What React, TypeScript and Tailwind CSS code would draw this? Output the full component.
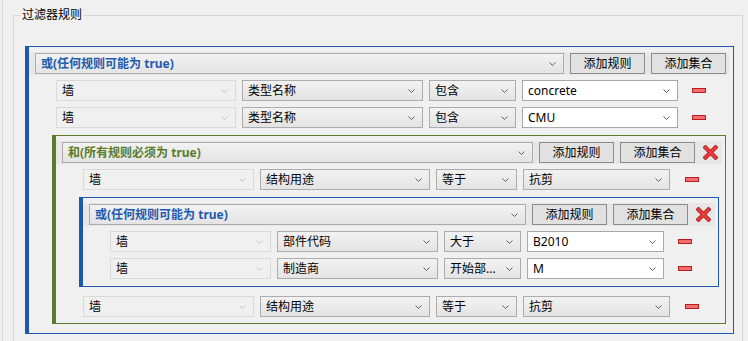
import type { ReactNode } from "react";

type Kind = "disabled" | "list" | "edit";

const boxByKind: Record<Kind, string> = {
  disabled: "border-[#d9d9d9] bg-[#f0f0f0] text-black",
  list: "border-[#acacac] bg-linear-to-b from-[#f2f2f2] to-[#e4e4e4] text-black",
  edit: "border-[#a9a9a9] bg-white text-black",
};

function Chevron({ light }: { light?: boolean }) {
  return (
    <svg
      width="7"
      height="4"
      viewBox="0 0 7 4"
      className={light ? "shrink-0 text-[#c4c4c4]" : "shrink-0 text-[#5f5f5f]"}
    >
      <path d="M0.5 0.5 L3.5 3.5 L6.5 0.5" fill="none" stroke="currentColor" strokeWidth="1" />
    </svg>
  );
}

function Combo({
  text,
  kind,
  className,
}: {
  text: string;
  kind: Kind;
  className: string;
}) {
  return (
    <div
      className={`flex h-[21px] shrink-0 items-center justify-between border pl-[5px] pr-[7px] ${boxByKind[kind]} ${className}`}
    >
      <span className="whitespace-nowrap leading-[17px]">{text}</span>
      <Chevron light={kind === "disabled"} />
    </div>
  );
}

function Minus({ className }: { className: string }) {
  return <div className={`h-[5px] w-[14px] shrink-0 border border-[#b81c1c] bg-[#f26d6d] ${className}`} />;
}

function CloseIcon() {
  return (
    <svg width="15" height="15" viewBox="0 0 15 15">
      <path d="M2.5 2.5 L12.5 12.5 M12.5 2.5 L2.5 12.5" stroke="#b01c1c" strokeWidth="4.2" strokeLinecap="square" />
      <path d="M2.5 2.5 L12.5 12.5 M12.5 2.5 L2.5 12.5" stroke="#ec3a3a" strokeWidth="2.6" strokeLinecap="square" />
    </svg>
  );
}

function Button({ children }: { children: ReactNode }) {
  return (
    <div className="ml-[6px] flex h-[21px] w-[75px] shrink-0 items-center justify-center border border-[#8c8c8c] bg-[#e1e1e1] leading-[17px] text-black">
      {children}
    </div>
  );
}

type Widths = { a: string; b: string; c: string; d: string; minus: string };

const L1: Widths = { a: "w-[180px]", b: "w-[181px]", c: "w-[87px]", d: "w-[156px]", minus: "ml-[8px]" };
const L2: Widths = { a: "w-[171px]", b: "w-[170px]", c: "w-[81px]", d: "w-[147px]", minus: "ml-[9px]" };
const L3: Widths = { a: "w-[161px]", b: "w-[161px]", c: "w-[77px]", d: "w-[137px]", minus: "ml-[8px]" };

function Rule({
  w,
  field,
  op,
  value,
  valueKind,
}: {
  w: Widths;
  field: string;
  op: string;
  value: string;
  valueKind: Kind;
}) {
  return (
    <div className="flex items-center gap-[6px]">
      <Combo text="墙" kind="disabled" className={w.a} />
      <Combo text={field} kind="list" className={w.b} />
      <Combo text={op} kind="list" className={w.c} />
      <Combo text={value} kind={valueKind} className={w.d} />
      <Minus className={w.minus} />
    </div>
  );
}

function Group({
  tone,
  label,
  closable,
  className,
  children,
}: {
  tone: "blue" | "green";
  label: string;
  closable?: boolean;
  className: string;
  children: ReactNode;
}) {
  const border = tone === "blue" ? "border-[#1c58ad]" : "border-[#5a7c2a]";
  const text = tone === "blue" ? "text-[#1f5aae]" : "text-[#5a7c2a]";
  return (
    <div className={`border-y border-r border-l-4 pt-[5px] ${border} ${className}`}>
      <div
        className={`flex h-[23px] items-center bg-[#e7e7e7] pl-[6px] ${closable ? "mr-[3px]" : "mr-[4px] pr-[3px]"}`}
      >
        <div className="flex h-[21px] min-w-0 flex-1 items-center justify-between border border-[#acacac] bg-linear-to-b from-[#f2f2f2] to-[#e4e4e4] pl-[5px] pr-[7px]">
          <span className={`whitespace-nowrap font-bold leading-[17px] ${text}`}>{label}</span>
          <Chevron />
        </div>
        <Button>添加规则</Button>
        <Button>添加集合</Button>
        {closable ? (
          <div className="flex w-[27px] shrink-0 pl-[8px]">
            <CloseIcon />
          </div>
        ) : null}
      </div>
      <div className="mt-[5px] flex flex-col gap-[6px] pl-[27px]">{children}</div>
    </div>
  );
}

export default function App() {
  return (
    <div className="h-[341px] w-[748px] overflow-hidden bg-[#f0f0f0] pl-[2px] font-['Noto_Sans','Noto_Sans_CJK_SC',sans-serif] text-[12px] text-black">
      <div className="h-full border-l border-[#dadada] pl-[10px] pt-[15px]">
        <div className="relative h-[340px] w-[730px] border border-[#d5d5d5] pl-[11px] pt-[30px]">
          <div className="absolute -top-[9px] left-[6px] h-[16px] bg-[#f0f0f0] px-[2px] leading-[16px]">
            过滤器规则
          </div>
          <Group tone="blue" label="或(任何规则可能为 true)" className="w-[709px] pb-[6px]">
            <Rule w={L1} field="类型名称" op="包含" value="concrete" valueKind="edit" />
            <Rule w={L1} field="类型名称" op="包含" value="CMU" valueKind="edit" />
            <div className="-ml-[4px] mb-[3px] mr-[7px] mt-[1px]">
              <Group tone="green" label="和(所有规则必须为 true)" closable className="pb-[6px]">
                <Rule w={L2} field="结构用途" op="等于" value="抗剪" valueKind="list" />
                <div className="-ml-[4px] mb-[3px] mr-[6px] mt-[1px]">
                  <Group tone="blue" label="或(任何规则可能为 true)" closable className="pb-[7px]">
                    <Rule w={L3} field="部件代码" op="大于" value="B2010" valueKind="edit" />
                    <Rule w={L3} field="制造商" op="开始部..." value="M" valueKind="edit" />
                  </Group>
                </div>
                <Rule w={L2} field="结构用途" op="等于" value="抗剪" valueKind="list" />
              </Group>
            </div>
          </Group>
        </div>
      </div>
    </div>
  );
}
